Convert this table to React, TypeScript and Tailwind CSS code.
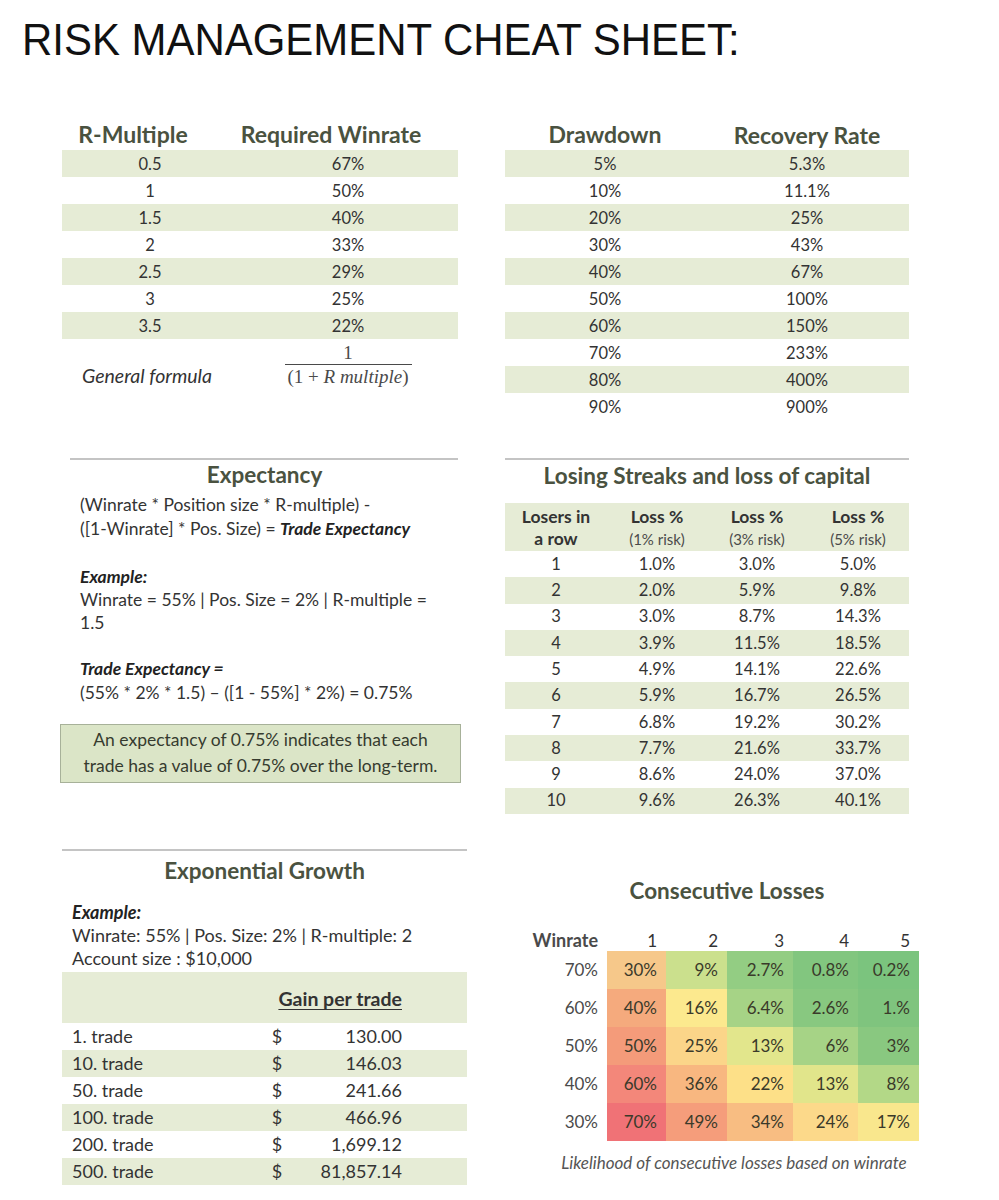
const rMultiples = [
  ['0.5', '67%'],
  ['1', '50%'],
  ['1.5', '40%'],
  ['2', '33%'],
  ['2.5', '29%'],
  ['3', '25%'],
  ['3.5', '22%'],
];

const drawdowns = [
  ['5%', '5.3%'],
  ['10%', '11.1%'],
  ['20%', '25%'],
  ['30%', '43%'],
  ['40%', '67%'],
  ['50%', '100%'],
  ['60%', '150%'],
  ['70%', '233%'],
  ['80%', '400%'],
  ['90%', '900%'],
];

const streaks = [
  ['1', '1.0%', '3.0%', '5.0%'],
  ['2', '2.0%', '5.9%', '9.8%'],
  ['3', '3.0%', '8.7%', '14.3%'],
  ['4', '3.9%', '11.5%', '18.5%'],
  ['5', '4.9%', '14.1%', '22.6%'],
  ['6', '5.9%', '16.7%', '26.5%'],
  ['7', '6.8%', '19.2%', '30.2%'],
  ['8', '7.7%', '21.6%', '33.7%'],
  ['9', '8.6%', '24.0%', '37.0%'],
  ['10', '9.6%', '26.3%', '40.1%'],
];

const growth = [
  ['1. trade', '130.00'],
  ['10. trade', '146.03'],
  ['50. trade', '241.66'],
  ['100. trade', '466.96'],
  ['200. trade', '1,699.12'],
  ['500. trade', '81,857.14'],
];

// each cell carries its own conditional-format colour, as in the sheet
const heat = [
  { rate: '70%', cells: [['30%', '#f6c88a'], ['9%', '#cbe08d'], ['2.7%', '#93cd83'], ['0.8%', '#82c67f'], ['0.2%', '#7bc47e']] },
  { rate: '60%', cells: [['40%', '#f5aa7d'], ['16%', '#fce98e'], ['6.4%', '#a6d386'], ['2.6%', '#88c880'], ['1.%', '#7fc47e']] },
  { rate: '50%', cells: [['50%', '#f49b7a'], ['25%', '#fbd589'], ['13%', '#e2e68c'], ['6%', '#a6d386'], ['3%', '#89c880']] },
  { rate: '40%', cells: [['60%', '#f3877a'], ['36%', '#f8b780'], ['22%', '#fde088'], ['13%', '#e1e58b'], ['8%', '#b3d887']] },
  { rate: '30%', cells: [['70%', '#f07276'], ['49%', '#f59d7b'], ['34%', '#f8bd82'], ['24%', '#fcd98a'], ['17%', '#f9e78d']] },
];

const cellWidths = ['w-[59px]', 'w-[61px]', 'w-[66px]', 'w-[65px]', 'w-[61px]'];

function Rule({ className }: { className: string }) {
  return <div className={`h-[2px] bg-[#c4c4c4] ${className}`}></div>;
}

function RMultipleTable() {
  return (
    <div className="w-[396px]">
      <div className="flex h-[32px] items-center text-[23px] font-bold text-[#4a5240]">
        <div className="w-[176px] pr-[34px] text-center">R-Multiple</div>
        <div className="w-[220px] pr-[34px] text-center">Required Winrate</div>
      </div>
      {rMultiples.map(([r, w], i) => (
        <div key={r} className={`flex h-[27px] items-center pt-[2px] text-[16.5px] ${i % 2 === 0 ? 'bg-[#e6ecd6]' : ''}`}>
          <div className="w-[176px] text-center">{r}</div>
          <div className="w-[220px] text-center">{w}</div>
        </div>
      ))}
      <div className="flex h-[50px] items-center">
        <div className="w-[176px] pt-[24px] pr-[6px] text-center text-[19.5px] italic">General formula</div>
        <div className="flex w-[220px] flex-col items-center pt-[2px] font-['Liberation_Serif',serif] text-[19px] text-[#4a4a4a]">
          <div className="leading-[18px]">1</div>
          <div className="mt-[2px] h-px w-[127px] bg-[#4a4a4a]"></div>
          <div className="mt-[3px] leading-[18px]">
            (1 + <span className="italic">R multiple</span>)
          </div>
        </div>
      </div>
    </div>
  );
}

function DrawdownTable() {
  return (
    <div className="w-[404px]">
      <div className="flex h-[32px] items-center text-[23px] font-bold text-[#4a5240]">
        <div className="w-[200px] text-center">Drawdown</div>
        <div className="w-[204px] pt-[3px] text-center">Recovery Rate</div>
      </div>
      {drawdowns.map(([d, r], i) => (
        <div key={d} className={`flex h-[27px] items-center pt-[2px] text-[16.5px] ${i % 2 === 0 ? 'bg-[#e6ecd6]' : ''}`}>
          <div className="w-[200px] text-center">{d}</div>
          <div className="w-[204px] text-center">{r}</div>
        </div>
      ))}
    </div>
  );
}

function Expectancy() {
  return (
    <div className="w-[405px]">
      <Rule className="ml-[8px] w-[388px]" />
      <div className="mt-[2px] h-[26px] text-center text-[22.5px] font-bold leading-[26px] text-[#4a5240]">Expectancy</div>
      <div className="mt-[5px] pl-[18px] text-[17.5px] leading-[24px] text-[#333]">
        <div>(Winrate * Position size * R-multiple) -</div>
        <div>
          ([1-Winrate] * Pos. Size) = <span className="font-bold italic text-[#222]">Trade Expectancy</span>
        </div>
      </div>
      <div className="mt-[24px] pl-[18px] text-[17.5px] leading-[23px] text-[#333]">
        <div className="font-bold italic text-[#222]">Example:</div>
        <div>Winrate = 55% | Pos. Size = 2% | R-multiple =</div>
        <div>1.5</div>
      </div>
      <div className="mt-[23px] pl-[18px] text-[17.5px] leading-[24px] text-[#333]">
        <div className="font-bold italic text-[#222]">Trade Expectancy =</div>
        <div>(55% * 2% * 1.5) – ([1 - 55%] * 2%) = 0.75%</div>
      </div>
      <div className="mt-[19px] -ml-[2px] h-[59px] w-[401px] border-[1.5px] border-[#a7b199] bg-[#dbe5c7] pt-[2px] text-center text-[17.5px] leading-[26px] text-[#363b2f]">
        <div>An expectancy of 0.75% indicates that each</div>
        <div>trade has a value of 0.75% over the long-term.</div>
      </div>
    </div>
  );
}

function LosingStreaks() {
  const widths = ['w-[102px]', 'w-[100px]', 'w-[100px]', 'w-[102px]'];
  return (
    <div className="w-[404px]">
      <Rule className="w-[404px]" />
      <div className="mt-[3px] h-[26px] text-center text-[22.5px] font-bold leading-[26px] text-[#4a5240]">Losing Streaks and loss of capital</div>
      <div className="mt-[14px] flex h-[48px] bg-[#e6ecd6] pt-[3px] text-center">
        <div className={`${widths[0]} text-[17.5px] font-bold leading-[22px] text-[#333]`}>
          <div>Losers in</div>
          <div>a row</div>
        </div>
        {['(1% risk)', '(3% risk)', '(5% risk)'].map((r, i) => (
          <div key={r} className={`${widths[i + 1]} leading-[22px]`}>
            <div className="text-[17.5px] font-bold text-[#333]">Loss %</div>
            <div className="text-[15px] text-[#4a4a4a]">{r}</div>
          </div>
        ))}
      </div>
      {streaks.map((row, i) => (
        <div key={row[0]} className={`flex h-[26.3px] items-center text-center text-[16.5px] ${i % 2 === 1 ? 'bg-[#e6ecd6]' : ''}`}>
          {row.map((v, j) => (
            <div key={j} className={widths[j]}>{v}</div>
          ))}
        </div>
      ))}
    </div>
  );
}

function ExponentialGrowth() {
  return (
    <div className="w-[405px]">
      <Rule className="w-[405px]" />
      <div className="mt-[7px] h-[26px] text-center text-[22.5px] font-bold leading-[26px] text-[#4a5240]">Exponential Growth</div>
      <div className="mt-[17px] pl-[10px] text-[18px] leading-[23px] text-[#333]">
        <div className="font-bold italic text-[#222]">Example:</div>
        <div>Winrate: 55% | Pos. Size: 2% | R-multiple: 2</div>
        <div>Account size : $10,000</div>
      </div>
      <div className="mt-[1.5px] flex h-[51px] items-center justify-end bg-[#e6ecd6] pr-[65px] pt-[4px]">
        <span className="text-[19.5px] font-bold text-[#333] underline underline-offset-[3px]">Gain per trade</span>
      </div>
      {growth.map(([label, value], i) => (
        <div key={label} className={`flex h-[27px] items-center text-[18px] ${i % 2 === 1 ? 'bg-[#e6ecd6]' : ''}`}>
          <div className="w-[205px] pl-[10px]">{label}</div>
          <div className="w-[20px] text-center">$</div>
          <div className="w-[115px] text-right">{value}</div>
        </div>
      ))}
    </div>
  );
}

function ConsecutiveLosses() {
  return (
    <div className="w-[420px]">
      <div className="mt-[29px] h-[26px] pl-[24px] text-center text-[22.5px] font-bold leading-[26px] text-[#4a5240]">Consecutive Losses</div>
      <div className="mt-[26px] flex h-[21px] items-center text-[17px] leading-[21px]">
        <div className="w-[102px] pr-[9px] text-right text-[18px] font-bold text-[#4a4a4a]">Winrate</div>
        {['1', '2', '3', '4', '5'].map((n, i) => (
          <div key={n} className={`${cellWidths[i]} pr-[9px] text-right`}>{n}</div>
        ))}
      </div>
      {heat.map((row) => (
        <div key={row.rate} className="flex h-[38px] items-center text-[17px]">
          <div className="w-[102px] pr-[9px] text-right text-[#4a4a4a]">{row.rate}</div>
          {row.cells.map(([v, c], i) => (
            <div key={i} className={`${cellWidths[i]} flex h-[38px] items-center justify-end pr-[9px] text-[#3a3a2a]`} style={{ backgroundColor: c }}>
              {v}
            </div>
          ))}
        </div>
      ))}
      <div className="mt-[11px] h-[22px] pl-[38px] text-center text-[17px] italic leading-[22px] text-[#555]">
        Likelihood of consecutive losses based on winrate
      </div>
    </div>
  );
}

export default function App() {
  return (
    <div className="h-[1200px] w-[999px] overflow-hidden bg-white font-[Lato,sans-serif] text-[#333]">
      <div className="h-[62px] pl-[22px] pt-[18px]">
        <div className="inline-block origin-left scale-x-[0.953] font-['Liberation_Sans',Arial,sans-serif] text-[44px] leading-[44px] text-[#111]">
          RISK MANAGEMENT CHEAT SHEET:
        </div>
      </div>
      <div className="mt-[56px] flex h-[340px] pl-[62px]">
        <div className="w-[443px]">
          <RMultipleTable />
        </div>
        <DrawdownTable />
      </div>
      <div className="flex h-[391px] pl-[62px]">
        <div className="w-[443px]">
          <Expectancy />
        </div>
        <LosingStreaks />
      </div>
      <div className="flex pl-[62px]">
        <div className="w-[443px]">
          <ExponentialGrowth />
        </div>
        <ConsecutiveLosses />
      </div>
    </div>
  );
}
